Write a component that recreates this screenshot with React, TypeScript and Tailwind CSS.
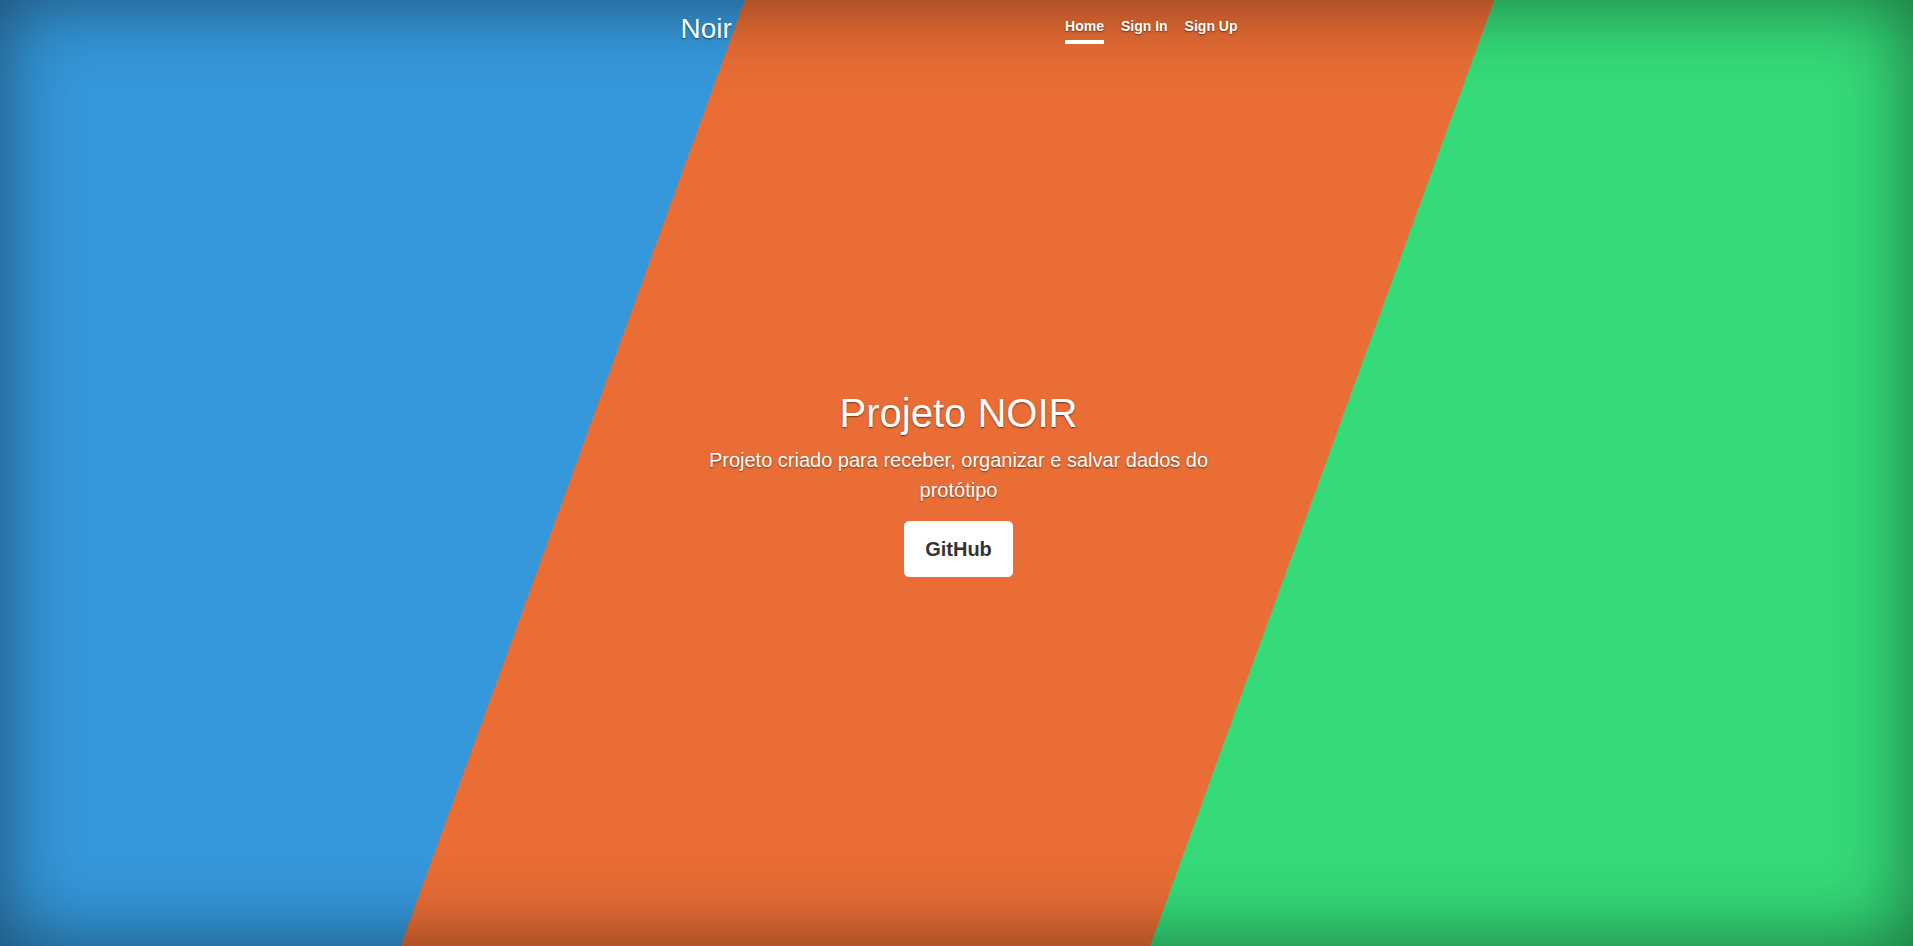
const navLinks = [
  { label: "Home", active: true },
  { label: "Sign In", active: false },
  { label: "Sign Up", active: false },
]

export default function App() {
  return (
    <div className="h-screen w-full overflow-hidden bg-[linear-gradient(110deg,#3598db_33%,#e96d35_33%,#e96d35_66.2%,#35db79_66.2%)] shadow-[inset_0_0_5rem_rgba(0,0,0,0.5)] font-['Liberation_Sans',Arial,sans-serif] text-white [text-shadow:0_0.05rem_0.1rem_rgba(0,0,0,0.5)]">
      <div className="flex h-full flex-col pl-1">
        <header className="mx-auto flex w-[558px] items-start justify-between pt-[11px]">
          <h3 className="mt-px ml-px text-[28px] leading-[1.2] font-normal">Noir</h3>
          <nav className="flex gap-[17px]">
            {navLinks.map((link) => (
              <a
                key={link.label}
                href="#"
                className={
                  link.active
                    ? "border-b-4 border-white pt-[5px] pb-[3px] text-sm leading-[21px] font-bold text-white"
                    : "border-b-4 border-transparent pt-[5px] pb-[3px] text-sm leading-[21px] font-bold text-white"
                }
              >
                {link.label}
              </a>
            ))}
          </nav>
        </header>

        <main className="mx-auto flex w-[558px] flex-1 flex-col items-center justify-center pb-[25px] text-center">
          <h1 className="mb-2 text-[40px] leading-[1.2] font-normal">Projeto NOIR</h1>
          <p className="mb-4 text-xl leading-[30px] font-light">
            Projeto criado para receber, organizar e salvar dados do protótipo
          </p>
          <a
            href="#"
            className="rounded-[0.3rem] border border-white bg-white px-5 py-3 text-xl leading-[30px] font-bold text-[#333] [text-shadow:none]"
          >
            GitHub
          </a>
        </main>
      </div>
    </div>
  )
}
